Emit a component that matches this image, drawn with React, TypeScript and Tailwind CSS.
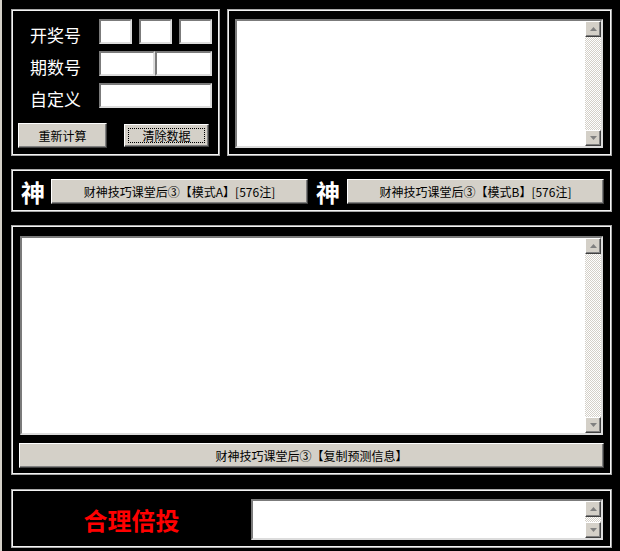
import React from 'react';

const raised =
  'bg-[#d4d0c8] border border-t-white border-l-white border-r-[#404040] border-b-[#404040] shadow-[inset_-1px_-1px_0_#808080]';
const sunken =
  'bg-white border-2 border-t-[#7b7b7b] border-l-[#7b7b7b] border-r-[#dcdcdc] border-b-[#dcdcdc]';
const panel = 'border border-[#a8a8a8] shadow-[inset_0_0_0_1px_#f4f4f4]';

function Arrow({ dir }: { dir: 'up' | 'down' }) {
  return (
    <div className={`flex h-[16px] w-[16px] items-center justify-center ${raised}`}>
      <svg width="7" height="4" viewBox="0 0 7 4">
        {dir === 'up' ? (
          <polygon points="3.5,0 7,4 0,4" fill="#808080" />
        ) : (
          <polygon points="0,0 7,0 3.5,4" fill="#808080" />
        )}
      </svg>
    </div>
  );
}

function ScrollBar() {
  return (
    <div className="flex w-[16px] flex-col">
      <Arrow dir="up" />
      <div className="flex-1 bg-[repeating-conic-gradient(#d4d0c8_0_25%,#ffffff_0_50%)] bg-[length:2px_2px]" />
      <Arrow dir="down" />
    </div>
  );
}

function TextBox({ className }: { className: string }) {
  return (
    <div className={`flex ${sunken} ${className}`}>
      <div className="flex-1" />
      <ScrollBar />
    </div>
  );
}

function Btn({ children, className }: { children: React.ReactNode; className: string }) {
  return (
    <button
      className={`flex h-[25px] items-center justify-center text-[12px] leading-none text-black ${raised} ${className}`}
    >
      {children}
    </button>
  );
}

export default function App() {
  const rowLabel = 'w-[87px] pl-[18px] pt-[7px] text-[17px] leading-none text-white';
  return (
    <div className="h-[551px] w-[620px] overflow-hidden border-l-2 border-[#d4d0c8] bg-black pl-[9px] pt-[9px] font-['Noto_Sans_CJK_SC',sans-serif]">
      {/* top row */}
      <div className="flex gap-[7px]">
        <div className={`h-[147px] w-[209px] ${panel} pt-[9px]`}>
          <div className="flex flex-col gap-[7px]">
            <div className="flex h-[25px] items-start">
              <span className={rowLabel}>开奖号</span>
              <div className="flex gap-[7px]">
                <div className={`h-[25px] w-[33px] ${sunken}`} />
                <div className={`h-[25px] w-[33px] ${sunken}`} />
                <div className={`h-[25px] w-[33px] ${sunken}`} />
              </div>
            </div>
            <div className="flex h-[25px] items-start">
              <span className={rowLabel}>期数号</span>
              <div className="flex">
                <div className={`h-[25px] w-[56px] ${sunken}`} />
                <div className={`h-[25px] w-[57px] ${sunken}`} />
              </div>
            </div>
            <div className="flex h-[25px] items-start">
              <span className={rowLabel}>自定义</span>
              <div className={`h-[25px] w-[113px] ${sunken}`} />
            </div>
          </div>
          <div className="mt-[15px] flex pl-[6px]">
            <Btn className="w-[89px]">重新计算</Btn>
            <div className="ml-[16px] h-[25px] w-[87px] border border-black">
              <div className={`flex h-full w-full items-center justify-center p-[3px] ${raised}`}>
                <span className="flex h-full w-full items-center justify-center border border-dotted border-black text-[12px] leading-none text-black">
                  清除数据
                </span>
              </div>
            </div>
          </div>
        </div>
        <div className={`h-[147px] w-[385px] ${panel} pl-[7px] pt-[9px]`}>
          <TextBox className="h-[129px] w-[368px]" />
        </div>
      </div>

      {/* mode buttons */}
      <div className={`mt-[13px] flex h-[43px] w-[601px] items-start ${panel} pl-[8px] pt-[9px]`}>
        <span className="flex h-[25px] w-[26px] items-center justify-center text-[24px] font-bold leading-none text-white">
          神
        </span>
        <Btn className="ml-[5px] w-[257px]">财神技巧课堂后③【模式A】[576注]</Btn>
        <span className="ml-[7px] flex h-[25px] w-[26px] items-center justify-center text-[24px] font-bold leading-none text-white">
          神
        </span>
        <Btn className="ml-[6px] w-[257px]">财神技巧课堂后③【模式B】[576注]</Btn>
      </div>

      {/* prediction output */}
      <div className={`mt-[13px] h-[250px] w-[601px] ${panel} pt-[10px]`}>
        <TextBox className="ml-[8px] h-[199px] w-[583px]" />
        <Btn className="ml-[7px] mt-[8px] w-[585px]">财神技巧课堂后③【复制预测信息】</Btn>
      </div>

      {/* multiplier */}
      <div className={`mt-[14px] flex h-[59px] w-[601px] ${panel} pt-[9px]`}>
        <div className="flex h-[41px] flex-1 items-center justify-center text-[24px] font-bold leading-none text-[#ff0000]">
          合理倍投
        </div>
        <TextBox className="mr-[8px] h-[41px] w-[352px]" />
      </div>
    </div>
  );
}
